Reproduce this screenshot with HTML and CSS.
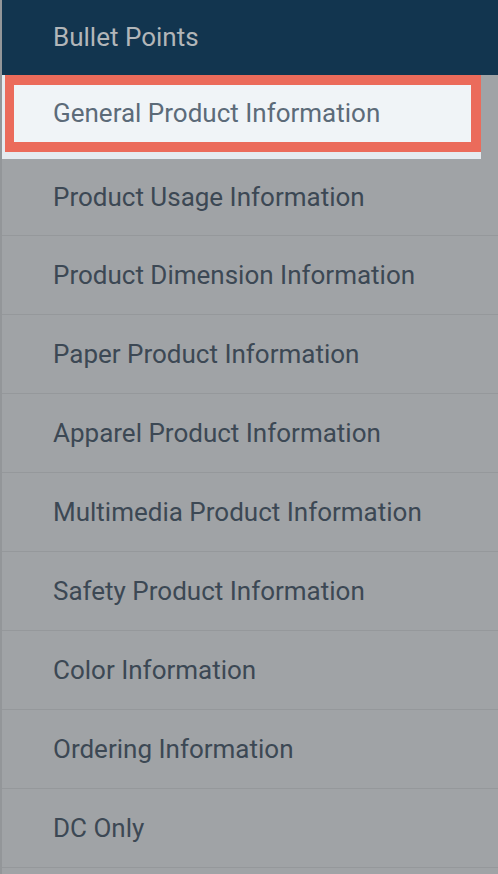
FILE: index.html
```html
<!DOCTYPE html>
<html>
  <head>
    <meta charset="UTF-8">
    <title>Bullet Points</title>
    <link rel="stylesheet" href="styles.css">
  </head>
  <body>
    <nav class="panel">
      <div class="header">Bullet Points</div>
      <ul class="menu">
        <li class="selected"><span class="focus">General Product Information</span></li>
        <li class="first">Product Usage Information</li>
        <li>Product Dimension Information</li>
        <li>Paper Product Information</li>
        <li>Apparel Product Information</li>
        <li>Multimedia Product Information</li>
        <li>Safety Product Information</li>
        <li>Color Information</li>
        <li>Ordering Information</li>
        <li>DC Only</li>
      </ul>
    </nav>
  </body>
</html>
```

FILE: styles.css
```css
body {
  margin: 0;
  background: #a0a3a6;
  font-family: Roboto, "Liberation Sans", sans-serif;
}

.panel {
  border-left: 2px solid #939699;
  min-height: 874px;
  box-sizing: border-box;
}

.header {
  height: 75px;
  background: #12354f;
  color: #b2b6b9;
  font-size: 26px;
  line-height: 75px;
  padding-left: 51px;
}

.menu {
  list-style: none;
  margin: 0;
  padding: 0;
}

.menu li {
  height: 78px;
  line-height: 78px;
  padding-left: 51px;
  border-bottom: 1px solid #95989b;
  color: #3c4854;
  font-size: 26px;
  white-space: nowrap;
}

.menu li.first {
  height: 76px;
  line-height: 76px;
}

.menu li.selected {
  height: 84px;
  padding: 0 16px 0 3px;
  border-bottom: none;
  background: linear-gradient(to right, #e5eaef 0, #e5eaef 479px, #a0a3a6 479px);
}

.focus {
  display: block;
  height: 57px;
  line-height: 57px;
  border: 10px solid #eb6b5b;
  border-left-width: 9px;
  background: #f0f4f7;
  color: #5c6b79;
  padding-left: 39px;
  width: 418px;
}
```
